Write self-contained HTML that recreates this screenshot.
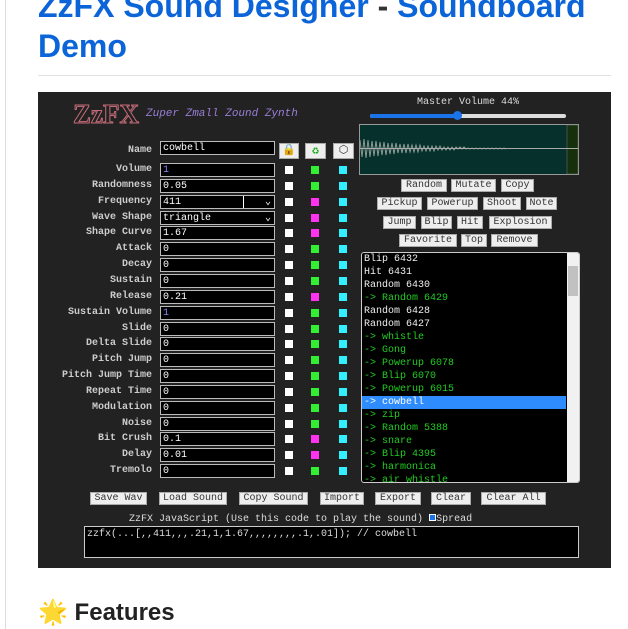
<!DOCTYPE html>
<html><head><meta charset="utf-8"><style>
*{margin:0;padding:0;box-sizing:border-box}
body{width:628px;height:629px;overflow:hidden;background:#fff;position:relative;font-family:"Liberation Sans",sans-serif}
.a{position:absolute}
h1{position:absolute;left:38px;font-size:32px;font-weight:bold;color:#0b64d8;line-height:38px;white-space:nowrap}
.panel{position:absolute;left:38px;top:92px;width:573px;height:476px;background:#222}
.m{font-family:"Liberation Mono",monospace;font-size:10px}
.lbl{position:absolute;right:476px;width:120px;text-align:right;color:#ccc;font-weight:bold;font-family:"Liberation Mono",monospace;font-size:10px;line-height:12px}
.inp{position:absolute;left:160px;width:115px;height:14px;background:#000;border:1px solid #bbb;color:#fff;font-family:"Liberation Mono",monospace;font-size:10px;line-height:13px;padding-left:2px}
.cb{position:absolute;width:8px;height:8px}
.btn{position:absolute;height:13px;background:#eee;border:1px solid #aaa;color:#333;font-family:"Liberation Mono",monospace;font-size:10px;line-height:12px;text-align:center}
.li{height:13px;line-height:13px;padding-left:2px;white-space:nowrap}
.g{color:#2c2}
</style></head><body>
<div class="a" style="left:5px;top:0;width:1px;height:629px;background:#ddd"></div>
<h1 style="top:-13px">ZzFX Sound Designer <span style="color:#333">-</span> Soundboard</h1>
<h1 style="top:27px">Demo</h1>
<div class="a" style="left:38px;top:75px;width:573px;height:1px;background:#e2e2e2"></div>
<div class="panel"></div>
<div class="a" style="left:73px;top:99px;font-family:'Liberation Serif',serif;font-size:27px;font-weight:bold;color:#222;-webkit-text-stroke:1px #c56b78">ZzFX</div>
<div class="a m" style="left:146px;top:108px;color:#9a7ed8;font-style:italic;font-size:11px">Zuper Zmall Zound Zynth</div>
<div class="lbl" style="top:145px">Name</div>
<div class="inp" style="top:141px">cowbell</div>
<div class="btn" style="left:279px;top:143px;width:20px;height:16px;font-size:11px;line-height:14px">🔒</div>
<div class="btn" style="left:305px;top:143px;width:21px;height:16px;color:#1a1;font-size:12px;line-height:14px">♻</div>
<div class="btn" style="left:333px;top:143px;width:21px;height:16px;font-size:11px;line-height:14px">⬡</div>
<div id="rows"></div>
<div class="a m" style="left:360px;top:97px;width:216px;text-align:center;color:#ddd">Master Volume 44%</div>
<div class="a" style="left:370px;top:114px;width:196px;height:4px;background:#ddd;border-radius:2px"></div>
<div class="a" style="left:370px;top:114px;width:88px;height:4px;background:#1a73e8;border-radius:2px"></div>
<div class="a" style="left:453px;top:111px;width:9px;height:9px;background:#1a73e8;border-radius:50%"></div>
<svg class="a" style="left:359px;top:124px" width="220" height="51">
<rect x="0.5" y="0.5" width="219" height="50" fill="#05302b" stroke="#999"/>
<rect x="208" y="1" width="11" height="49" fill="#15300a" stroke="#777" stroke-width="0.5"/>
<polyline fill="none" stroke="#8a9a94" stroke-width="1" points="1,16 3,33 5,15 7,34 9,16 11,33 13,17 15,32 17,17 19,32 21,18 23,31 25,18 27,31 29,19 31,30 33,19 35,30 37,19 39,29 41,20 43,29 45,20 47,29 49,20 51,28 53,21 55,28 57,21 59,28 61,21 63,27 65,22 67,27 69,22 71,27 73,22 75,27 77,22 79,26 81,22 83,26 85,23 87,26 89,23 91,26 93,23 95,26 97,23 99,25 101,23 103,25 105,23 107,25 109,24 111,25 113,24 115,25 117,24 119,25 121,24 123,25 125,24 127,25 129,24 131,25 133,24 135,25 137,24 139,25 141,24 143,25 145,24 147,25"/>
<line x1="1" y1="24.5" x2="219" y2="24.5" stroke="#aaa" stroke-width="1"/>
</svg>
<div class="btn" style="left:401px;top:179px;width:46px">Random</div>
<div class="btn" style="left:451px;top:179px;width:45px">Mutate</div>
<div class="btn" style="left:501px;top:179px;width:33px">Copy</div>
<div class="btn" style="left:377px;top:197px;width:45px">Pickup</div>
<div class="btn" style="left:427px;top:197px;width:51px">Powerup</div>
<div class="btn" style="left:483px;top:197px;width:38px">Shoot</div>
<div class="btn" style="left:526px;top:197px;width:31px">Note</div>
<div class="btn" style="left:383px;top:216px;width:33px">Jump</div>
<div class="btn" style="left:421px;top:216px;width:31px">Blip</div>
<div class="btn" style="left:457px;top:216px;width:26px">Hit</div>
<div class="btn" style="left:489px;top:216px;width:63px">Explosion</div>
<div class="btn" style="left:399px;top:234px;width:58px">Favorite</div>
<div class="btn" style="left:461px;top:234px;width:26px">Top</div>
<div class="btn" style="left:491px;top:234px;width:47px">Remove</div>
<div class="a m" style="left:361px;top:252px;width:219px;height:231px;background:#000;border:1px solid #ccc;border-radius:3px;overflow:hidden;color:#eee">
<div class="li">Blip 6432</div><div class="li">Hit 6431</div><div class="li">Random 6430</div>
<div class="li g">-> Random 6429</div><div class="li">Random 6428</div><div class="li">Random 6427</div>
<div class="li g">-> whistle</div><div class="li g">-> Gong</div><div class="li g">-> Powerup 6078</div>
<div class="li g">-> Blip 6070</div><div class="li g">-> Powerup 6015</div>
<div class="li" style="background:#2f8cff;color:#fff;width:204px">-> cowbell</div>
<div class="li g">-> zip</div><div class="li g">-> Random 5388</div><div class="li g">-> snare</div>
<div class="li g">-> Blip 4395</div><div class="li g">-> harmonica</div><div class="li g">-> air whistle</div>
<div class="a" style="left:205px;top:0;width:12px;height:229px;background:#f1f1f1"></div>
<div class="a" style="left:206px;top:13px;width:10px;height:30px;background:#c1c1c1"></div>
</div>
<div class="btn" style="left:90px;top:492px;width:57px">Save Wav</div>
<div class="btn" style="left:159px;top:492px;width:68px">Load Sound</div>
<div class="btn" style="left:239px;top:492px;width:69px">Copy Sound</div>
<div class="btn" style="left:320px;top:492px;width:44px">Import</div>
<div class="btn" style="left:375px;top:492px;width:46px">Export</div>
<div class="btn" style="left:431px;top:492px;width:40px">Clear</div>
<div class="btn" style="left:481px;top:492px;width:65px">Clear All</div>
<div class="a m" style="left:129px;top:514px;color:#ddd">ZzFX JavaScript (Use this code to play the sound) <span style="display:inline-block;width:7px;height:7px;background:#1a73e8;border:1px solid #fff"></span>Spread</div>
<div class="a m" style="left:84px;top:526px;width:495px;height:32px;background:#000;border:1px solid #ccc;color:#ddd;padding:2px 2px;white-space:nowrap">zzfx(...[,,411,,,.21,1,1.67,,,,,,,,.1,.01]); // cowbell</div>
<div class="a" style="left:38px;top:597px;font-size:24px;line-height:32px;color:#222;font-weight:bold;white-space:nowrap"><span style="color:#f5b800">🌟</span> Features</div>
<script>
var L=["Volume","Randomness","Frequency","Wave Shape","Shape Curve","Attack","Decay","Sustain","Release","Sustain Volume","Slide","Delta Slide","Pitch Jump","Pitch Jump Time","Repeat Time","Modulation","Noise","Bit Crush","Delay","Tremolo"];
var V=["1","0.05","411","triangle","1.67","0","0","0","0.21","1","0","0","0","0","0","0","0","0.1","0.01","0"];
var M=[2,3,4,8,17,18];var h="";
for(var i=0;i<20;i++){var c=170+i*15.85;
h+='<div class="lbl" style="top:'+(c-6)+'px">'+L[i]+'</div>';
var ex="";if(i==2)ex='<span style="position:absolute;left:82px;top:0;width:1px;height:12px;background:#fff"></span><span style="position:absolute;right:3px;top:0">⌄</span>';
if(i==3)ex='<span style="position:absolute;right:3px;top:0">⌄</span>';
h+='<div class="inp" style="top:'+(c-7)+'px;color:'+(i==0||i==9?'#88f':'#fff')+'">'+V[i]+ex+'</div>';
h+='<div class="cb" style="left:285px;top:'+(c-4)+'px;background:#fff"></div>';
h+='<div class="cb" style="left:311px;top:'+(c-4)+'px;background:'+(M.indexOf(i)>=0?'#f3e':'#3e3')+'"></div>';
h+='<div class="cb" style="left:339px;top:'+(c-4)+'px;background:#3ef"></div>';}
document.getElementById("rows").innerHTML=h;
</script>
</body></html>
